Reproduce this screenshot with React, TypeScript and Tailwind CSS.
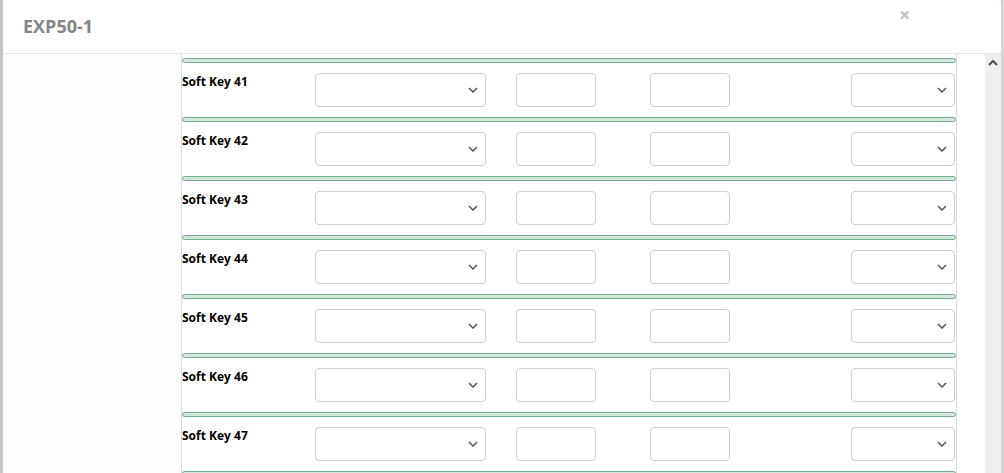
import React from "react";

const Chevron = () => (
  <svg width="10" height="6" viewBox="0 0 10 6" className="absolute right-[7px] top-1/2 -translate-y-1/2">
    <path d="M1 1 L5 5 L9 1" fill="none" stroke="#555" strokeWidth="1.5" />
  </svg>
);

const Bar = () => <div className="h-[5px] rounded-full border border-[#6fae8d] bg-[#d3e7da]" />;

const Row = ({ n }: { n: number }) => (
  <div>
    <Bar />
    <div className="flex h-[54px] items-start pt-[10px]">
      <div className="w-[133px] text-[12px] font-bold leading-[17px] text-black" style={{ fontFamily: '"Open Sans", sans-serif' }}>
        Soft Key {n}
      </div>
      <div className="relative h-[34px] w-[171px] rounded-[4px] border border-[#cfcfcf] bg-white">
        <Chevron />
      </div>
      <div className="ml-[30px] h-[34px] w-[80px] rounded-[4px] border border-[#cfcfcf] bg-white" />
      <div className="ml-[54px] h-[34px] w-[80px] rounded-[4px] border border-[#cfcfcf] bg-white" />
      <div className="ml-[121px] relative h-[34px] w-[104px] rounded-[4px] border border-[#cfcfcf] bg-white">
        <Chevron />
      </div>
    </div>
  </div>
);

export default function App() {
  const keys = [41, 42, 43, 44, 45, 46, 47];
  return (
    <div className="flex h-[473px] w-[1004px] overflow-hidden bg-[#e9e9e9]" style={{ fontFamily: '"Open Sans", sans-serif' }}>
      <div className="w-[3px] shrink-0 bg-[#c4c4c4]" />
      <div className="flex w-[998px] shrink-0 flex-col rounded-tr-[4px] bg-white">
        <div className="relative flex h-[54px] shrink-0 items-center border-b border-[#e5e5e5] pl-[20px]">
          <span className="text-[18px] font-bold text-[#858585]">EXP50-1</span>
          <span className="absolute left-[896px] top-[3px] text-[20px] font-bold leading-[24px] text-[#c2c2c2]">×</span>
        </div>
        <div className="flex min-h-0 flex-1">
          <div className="w-[178px] shrink-0 bg-[#fdfdfd]" />
          <div className="w-[776px] shrink-0 overflow-hidden border-x border-[#dcdcdc] pt-[4px]">
            {keys.map((k) => (
              <Row key={k} n={k} />
            ))}
            <Bar />
          </div>
          <div className="w-[28px] shrink-0" />
          <div className="relative w-[16px] shrink-0 bg-[#efefef]">
            <svg width="10" height="7" viewBox="0 0 10 7" className="absolute left-[3px] top-[5px]">
              <path d="M1 6 L5 2 L9 6" fill="none" stroke="#505050" strokeWidth="2" />
            </svg>
          </div>
        </div>
      </div>
      <div className="w-[3px] shrink-0 bg-[#d6d6d6]" />
    </div>
  );
}
